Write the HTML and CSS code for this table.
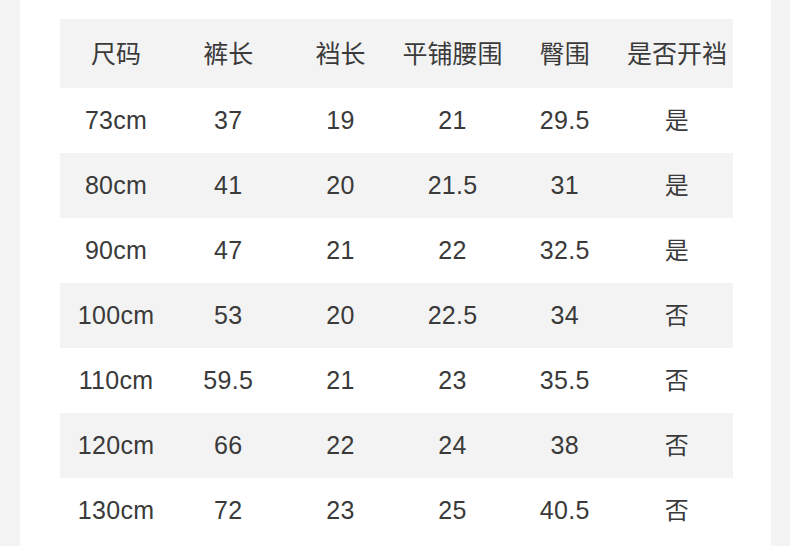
FILE: index.html
```html
<!DOCTYPE html>
<html lang="zh">
<head>
<meta charset="utf-8">
<link rel="stylesheet" href="styles.css">
</head>
<body>
<div class="panel">
  <div class="table">
    <div class="row head"><span>尺码</span><span>裤长</span><span>裆长</span><span>平铺腰围</span><span>臀围</span><span>是否开裆</span></div>
    <div class="row"><span>73cm</span><span>37</span><span>19</span><span>21</span><span>29.5</span><span class="cn">是</span></div>
    <div class="row alt"><span>80cm</span><span>41</span><span>20</span><span>21.5</span><span>31</span><span class="cn">是</span></div>
    <div class="row"><span>90cm</span><span>47</span><span>21</span><span>22</span><span>32.5</span><span class="cn">是</span></div>
    <div class="row alt"><span>100cm</span><span>53</span><span>20</span><span>22.5</span><span>34</span><span class="cn">否</span></div>
    <div class="row"><span>110cm</span><span>59.5</span><span>21</span><span>23</span><span>35.5</span><span class="cn">否</span></div>
    <div class="row alt"><span>120cm</span><span>66</span><span>22</span><span>24</span><span>38</span><span class="cn">否</span></div>
    <div class="row"><span>130cm</span><span>72</span><span>23</span><span>25</span><span>40.5</span><span class="cn">否</span></div>
  </div>
</div>
</body>
</html>
```
FILE: styles.css
```css
html, body {
  margin: 0;
  padding: 0;
  background: #f4f4f4;
}
body {
  width: 790px;
  height: 546px;
  overflow: hidden;
}
.panel {
  margin-left: 20px;
  width: 751px;
  height: 546px;
  background: #ffffff;
  padding: 19px 0 0 40px;
  box-sizing: border-box;
}
.table {
  width: 673px;
  display: flex;
  flex-direction: column;
}
.row {
  display: grid;
  grid-template-columns: repeat(6, 1fr);
  height: 65px;
  align-items: center;
  text-align: center;
  color: #3a3a3a;
  font-family: "Liberation Sans", "Noto Sans CJK SC", sans-serif;
  font-size: 25px;
  letter-spacing: 0.3px;
}
.row.head {
  height: 69px;
  background: #f3f3f3;
  font-family: "Noto Sans CJK SC", sans-serif;
  font-size: 25px;
  letter-spacing: 0;
  padding-bottom: 4px;
  box-sizing: border-box;
}
.row.alt {
  background: #f3f3f3;
}
.row .cn {
  font-family: "Noto Sans CJK SC", sans-serif;
  font-size: 24px;
  line-height: 1;
  padding-bottom: 3px;
}
```
